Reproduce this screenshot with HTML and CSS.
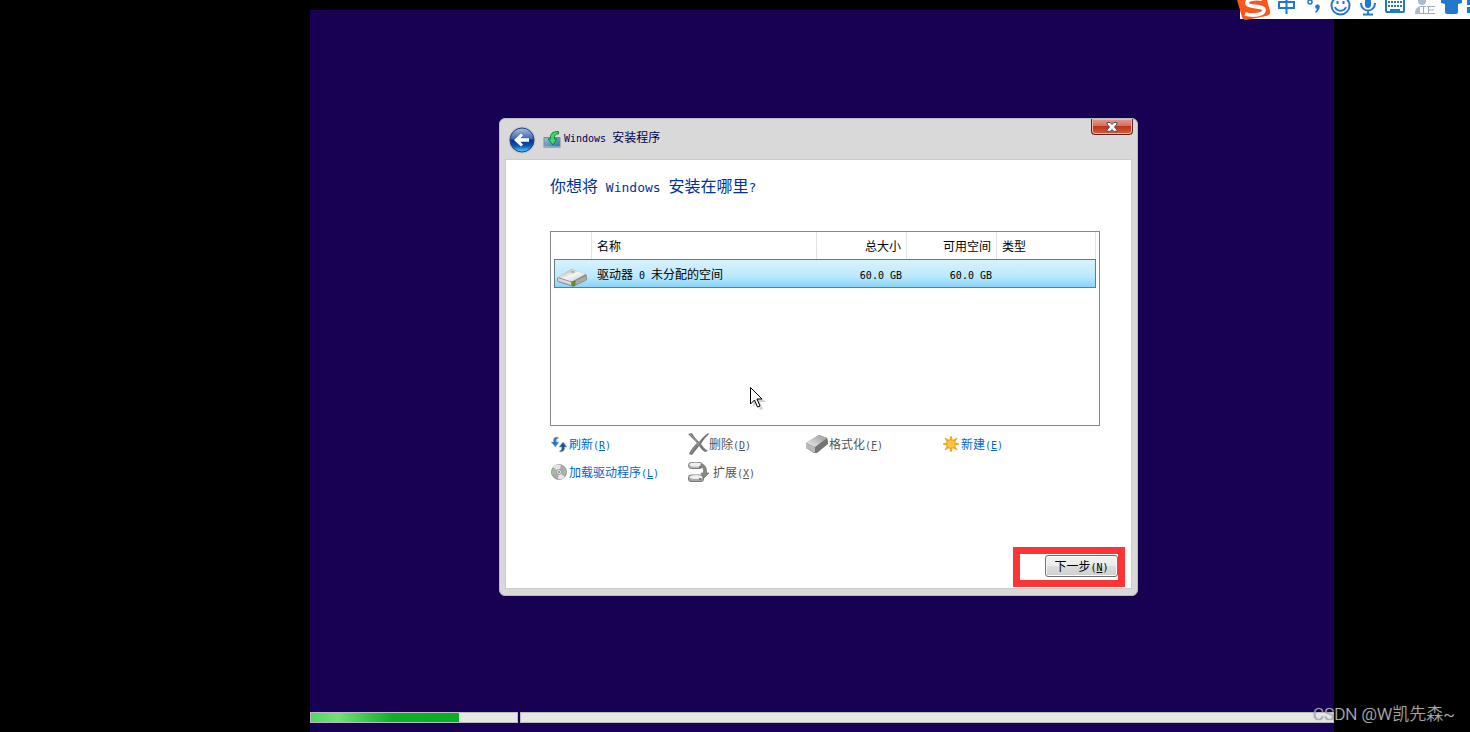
FILE: index.html
```
<!DOCTYPE html>
<html lang="zh-CN">
<head>
<meta charset="utf-8">
<title>Windows 安装程序</title>
<link rel="stylesheet" href="styles.css">
</head>
<body>
<main class="desktop">
  <section class="dialog" aria-label="Windows 安装程序">
    <header class="titlebar">
      <button class="back" aria-label="返回">
        <svg width="28" height="28" viewBox="0 0 28 28">
          <defs>
            <linearGradient id="orb" x1="0" y1="0" x2="0" y2="1">
              <stop offset="0" stop-color="#a9bfe4"/><stop offset=".46" stop-color="#3c64b0"/>
              <stop offset=".5" stop-color="#06318c"/><stop offset=".75" stop-color="#0b57b4"/><stop offset="1" stop-color="#4fdcff"/>
            </linearGradient>
          </defs>
          <circle cx="14" cy="14" r="13.5" fill="#c3c3c6"/>
          <circle cx="14" cy="14" r="12" fill="url(#orb)" stroke="#27447f"/>
          <path d="M6 14l7-6.500 2 2-2.600 2.800H21v3.400h-8.600l2.600 2.800-2 2z" fill="#fff"/>
        </svg>
      </button>
      <svg class="setup-icon" width="18" height="18" viewBox="0 0 18 18">
        <defs><linearGradient id="box" x1="0" y1="0" x2="1" y2="1"><stop offset="0" stop-color="#9fc4e4"/><stop offset="1" stop-color="#2d69ad"/></linearGradient></defs>
        <path d="M1 6.500h16v10H1z" fill="url(#box)" stroke="#7f8790"/>
        <path d="M1 15.500h16v1H1z" fill="#b6c9da"/>
        <path d="M15.500.5C9 .5 7 3 7.500 8H5l5 6 4-6h-2.500C11 5 12 3 15.500 3z" fill="#3ddb62" stroke="#087b27" stroke-width=".9"/>
      </svg>
      <h1 class="title"><span class="latin">Windows </span>安装程序</h1>
      <button class="close" aria-label="关闭">
        <svg width="12" height="10" viewBox="0 0 12 10"><path d="M1 .5h3l2 2 2-2h3v1.500L8.500 5 11 8v1.500H8l-2-2-2 2H1V8l2.500-3L1 2z" fill="#f4f4f4" stroke="#4b4c62"/></svg>
      </button>
    </header>
    <div class="client">
      <h2 class="question">你想将<span class="latin-large"> Windows </span>安装在哪里<span class="latin-large">?</span></h2>
      <div class="list">
        <table class="drives">
          <colgroup><col class="c-icon"><col class="c-name"><col class="c-size"><col class="c-size"><col></colgroup>
          <thead><tr><th></th><th>名称</th><th class="num">总大小</th><th class="num">可用空间</th><th>类型</th></tr></thead>
          <tbody><tr>
            <td class="drive-cell">
              <svg width="32" height="18" viewBox="0 0 32 18">
                <defs><linearGradient id="hd" x1="0" y1="0" x2="1" y2="1"><stop offset="0" stop-color="#999"/><stop offset=".5" stop-color="#f4f4f4"/><stop offset="1" stop-color="#c8c8c8"/></linearGradient></defs>
                <path d="M1 9L14 1q2-1 4 0l12 4q1 1 1 6l-12 6q-2 1-4 0L2 13q-1-1-1-4z" fill="#8b8787"/>
                <path d="M2 8L14 1q2-1 4 0l12 4-13 7q-2 0-3 0z" fill="url(#hd)"/>
                <path d="M2 9l13 4v3L2 12z" fill="#d8d8d8"/><path d="M17 13l13-6v4l-13 6z" fill="#a9a7a7"/>
                <path d="M17 13l2-1v4l-2 1z" fill="#35c400" stroke="#496020" stroke-width=".6"/>
                <ellipse cx="17" cy="3" rx="2" ry="1" fill="#aaa"/>
              </svg>
            </td>
            <td>驱动器<span class="latin"> 0 </span>未分配的空间</td>
            <td class="num"><span class="latin">60.0 GB</span></td>
            <td class="num"><span class="latin">60.0 GB</span></td>
            <td></td>
          </tr></tbody>
        </table>
      </div>
      <nav class="actions">
        <a class="action" href="#">
          <svg width="18" height="18" viewBox="0 0 18 18"><path d="M7 2C4 2 3 4 3.500 7H1l4.500 5L9 7H6.500C6 5 6 3.500 9 3z" fill="#2a77bd" stroke="#94bce0" stroke-width=".6"/><path d="M10 17c4-.5 5-2 4.500-5H17l-4-5-4 5h2.500c.5 2 0 3.500-2 4z" fill="#23548f" stroke="#94afd0" stroke-width=".6"/></svg>
          <span>刷新<span class="latin">(<u>R</u>)</span></span></a>
        <a class="action off" aria-disabled="true">
          <svg width="22" height="24" viewBox="0 0 22 24"><path d="M1 2l4-1c2 4 5 7 7 9 3-4 6-7 9-9l1 1c-3 3-6 6-8 10 2 3 4 5 7 7l-3 1c-2-1-4-3-6-6-3 4-5 6-7 9l-3-1c2-5 5-8 8-11C7 8 4 5 1 2z" fill="#777"/><path d="M3 2c4 4 7 8 10 12M4 21c2-4 5-8 9-11" stroke="#999" fill="none"/></svg>
          <span>删除<span class="latin">(<u>D</u>)</span></span></a>
        <a class="action off" aria-disabled="true">
          <svg width="24" height="20" viewBox="0 0 24 20"><defs><linearGradient id="er" x1="0" y1="1" x2="1" y2="0"><stop offset="0" stop-color="#eee"/><stop offset="1" stop-color="#999"/></linearGradient></defs><path d="M1 9L14 1l8 3q1 1 1 6l-11 9q-2 0-3 0l-8-5z" fill="#757575"/><path d="M1 9L14 1l8 3-12 9z" fill="url(#er)"/><path d="M1 9l9 4v6l-9-5z" fill="#b9b9b9"/></svg>
          <span>格式化<span class="latin">(<u>F</u>)</span></span></a>
        <a class="action" href="#">
          <svg width="18" height="18" viewBox="0 0 18 18"><path d="M9 1l1.500 4.500L15 3l-2.500 4.500L17 9l-4.500 1.500L15 15l-4.500-2.500L9 17l-1.500-4.500L3 15l2.500-4.500L1 9l4.500-1.500L3 3l4.500 2.500z" fill="#f6a817" stroke="#e9a223" stroke-width=".8"/><circle cx="9" cy="9" r="3.500" fill="#ffc83d"/></svg>
          <span>新建<span class="latin">(<u>E</u>)</span></span></a>
        <a class="action" href="#">
          <svg width="18" height="18" viewBox="0 0 18 18"><circle cx="9" cy="9" r="7.500" fill="#aaa" stroke="#999"/><path d="M9 9L3 4a8 8 0 0 1 8-2zM9 9l6 5a8 8 0 0 1-7 2z" fill="#e5e5e5"/><path d="M9 9L1.500 7l1 5zM9 9l7.500-2v4z" fill="#9bc39b"/><circle cx="9" cy="9" r="2.500" fill="#eee" stroke="#999"/><circle cx="9" cy="9" r="1" fill="#777"/></svg>
          <span>加载驱动程序<span class="latin">(<u>L</u>)</span></span></a>
        <a class="action off wide" aria-disabled="true">
          <svg width="22" height="22" viewBox="0 0 22 22"><g stroke="#777"><rect x="1.500" y="1.500" width="14" height="6" rx="3" fill="#bbb"/><rect x="1.500" y="14" width="15" height="6.500" rx="2.500" fill="#aaa"/></g><ellipse cx="8.500" cy="3.500" rx="6" ry="2" fill="#eee"/><ellipse cx="9" cy="16" rx="6.500" ry="2" fill="#eee"/><path d="M12 18h2M12 6h2" stroke="#444"/><path d="M14 3c4 0 6 4 5.500 9H22l-5 5-3-5h2.500C17 8 16 6 14 5z" fill="#888" stroke="#666" stroke-width=".6"/></svg>
          <span>扩展<span class="latin">(<u>X</u>)</span></span></a>
      </nav>
      <footer class="footer">
        <div class="highlight"><button class="next">下一步<span class="latin">(<u>N</u>)</span></button></div>
      </footer>
    </div>
  </section>
  <div class="progress">
    <div class="stage first"><div class="fill" style="width:72%"></div></div>
    <div class="stage second"></div>
  </div>
</main>

<aside class="ime">
  <svg width="234" height="22" viewBox="0 0 234 22">
    <path d="M4 0h230v19H4z" fill="#fff"/>
    <path d="M1 0l5 17q1 3 4 3l20-4q5-1 4-5L31 0z" fill="#f9571d"/>
    <path d="M9 14c8 2 19 1 19-4 0-5-17-2-17-7 0-4 7-5 15-4" fill="none" stroke="#fff" stroke-width="3.800"/>
    <g fill="none" stroke="#2377cc" stroke-width="2">
      <path d="M43 2h15v6H43zM50.500 0v14"/>
      <circle cx="74" cy="2" r="2" stroke-width="1.500"/>
      <circle cx="104.500" cy="5.500" r="9"/><path d="M99 7c2 5 9 5 11 0M101.500 1v3M107.500 1v3"/>
      <path d="M125 3c0 10 14 10 14 0M132 10v5M127 14.500h10"/>
      <rect x="150" y="-3" width="18" height="15" rx="1"/>
      <path d="M152 2h14M152 6h14" stroke-dasharray="2 1"/><path d="M154 10h10"/>
    </g>
    <path d="M80 5c4-2 6 3 0 8l-1-1c2-2 2-3 1-4q-2-1 0-3z" fill="#2377cc"/>
    <rect x="129" y="-4" width="6" height="12" rx="3" fill="#2377cc"/>
    <g fill="#aeb9cf"><circle cx="186" cy="1" r="4"/><path d="M179 14q0-8 7-8h6v8z"/></g>
    <path d="M184 6h15v9h-15z" fill="#fff"/><path d="M184 6.500h6M184 13.500h15M187.500 7v7M191 6.500h8M192 10h6M192.500 7v7" stroke="#9baac5" fill="none"/>
    <path d="M205 0l4-3h13l4 3v3l-4 1v8q0 2-2 2h-9q-2 0-2-2V4l-4-1z" fill="#2377cc"/>
    <path d="M231 0h3v5h-3zM231 7h3v6h-3z" fill="#2377cc"/>
  </svg>
</aside>

<svg class="cursor" width="18" height="26" viewBox="0 0 18 26">
  <path d="M1 1v17l4-4 3 7 3-1-3-7h6z" transform="translate(2 2)" fill="#000" opacity=".18"/>
  <path d="M.5.5v16.500l4-4 3 7 2.500-1-3-7H12z" fill="#fff" stroke="#000"/>
</svg>
<p class="watermark">CSDN @W凯先森~</p>
</body>
</html>
```
FILE: styles.css
```
* { box-sizing: border-box; }

body {
  margin: 0;
  min-height: 100vh;
  display: flex;
  position: relative;
  overflow: hidden;
  background: #000;
  color: #000;
  font: 12px/16px "Noto Sans CJK SC", sans-serif;
}

h1, h2, p { margin: 0; font-weight: 400; }

button { font: inherit; color: inherit; }

.latin { font-family: "DejaVu Sans Mono", monospace; font-size: 10px; line-height: 1; white-space: pre; }
.latin-large { font-family: "DejaVu Sans Mono", monospace; font-size: 13px; line-height: 1; white-space: pre; }

.desktop {
  flex: 1;
  display: flex;
  flex-direction: column;
  justify-content: space-between;
  margin: 10px 136px 0 310px;
  padding: 108px 0 9px;
  background: #180052;
}

.dialog {
  width: 639px;
  margin-left: 189px;
  padding: 0 5px 6px;
  border: 1px solid #bcbcc0;
  border-radius: 6px;
  background: #d9d9d9;
}

.titlebar { display: flex; align-items: flex-start; height: 40px; }

.back {
  width: 28px;
  height: 28px;
  margin: 7px 7px 0 3px;
  padding: 0;
  border: 0;
  background: none;
}

.back svg, .close svg, .action svg, .ime svg, .cursor, .drive-cell svg { display: block; }

.setup-icon { margin-top: 12px; }

.title { flex: 1; margin: 10px 0 0 3px; font-size: 12px; line-height: 16px; color: #000050; }

.close {
  display: flex;
  align-items: center;
  justify-content: center;
  width: 42px;
  height: 16px;
  margin-right: -1px;
  padding: 0;
  border: 1px solid #5a2424;
  border-top: 0;
  border-radius: 0 0 4px 4px;
  background: linear-gradient(#e39a8c, #d8705c 45%, #bd351b 50%, #d2603f);
  box-shadow: inset 0 0 0 1px #efb5a8;
}

.client {
  padding: 15px 6px 1px 44px;
  border: 1px solid #cbcbcb;
  background: #fff;
}

.question { font-size: 16px; line-height: 20px; color: #003399; }

.list {
  height: 195px;
  margin: 36px 25px 0 0;
  padding: 0 3px;
  border: 1px solid #828790;
  background: #fff;
}

.drives { width: 100%; table-layout: fixed; border-collapse: separate; border-spacing: 0; }

.c-icon { width: 38px; }
.c-name { width: 225px; }
.c-size { width: 90px; }

.drives th, .drives td { padding: 0 5px; text-align: left; font-weight: 400; line-height: 16px; }
.drives th { height: 27px; border-right: 1px solid #e2e2e2; }
.drives .num { text-align: right; }

.drives td {
  height: 29px;
  border: 0 solid #6d7780;
  border-width: 1px 0;
  background: linear-gradient(#d8f2fd, #bce9fd 60%, #9bdcfb 85%, #8ad3fa);
}

.drives td:first-child { border-left-width: 1px; }
.drives td:last-child { border-right-width: 1px; }
.drives .drive-cell { padding: 8px 0 0 1px; }

.actions {
  display: grid;
  grid-template-columns: 137px 118px 137px 1fr;
  grid-auto-rows: 28px;
  margin-top: 4px;
}

.action { display: flex; align-items: center; gap: 1px; color: #0066cc; text-decoration: none; white-space: nowrap; }
.action span { display: block; }
.action .latin { display: inline; }
.off { color: #555; gap: 0; }
.wide { gap: 4px; }

.footer { display: flex; justify-content: flex-end; margin-top: 61px; }

.highlight { padding: 1px 0 3px 25px; border: 7px solid #fb3535; }

.next {
  display: block;
  width: 73px;
  height: 22px;
  padding: 0;
  border: 1px solid #707070;
  border-radius: 3px;
  background: linear-gradient(#f2f2f2, #ebebeb 50%, #dddddd 50%, #cfcfcf);
  box-shadow: inset 0 0 0 1px #fafafa;
}

.progress { display: flex; gap: 2px; }

.stage { height: 11px; border: 1px solid #bcbcbc; background: #e6e6e6; }
.first { width: 208px; }
.second { flex: 1; }

.fill { height: 100%; background: linear-gradient(90deg, #4fd765, #72e07c 18%, #0bb02b 55%, #06b025); }

.ime { position: absolute; top: 0; right: 0; }

.cursor { position: absolute; left: 750px; top: 387px; }

.watermark {
  position: absolute;
  right: 15px;
  bottom: 7px;
  font: 300 17px/22px Roboto, "Noto Sans CJK SC", sans-serif;
  color: #b4b4b4;
  text-shadow: 0 0 1px #666;
}
```
